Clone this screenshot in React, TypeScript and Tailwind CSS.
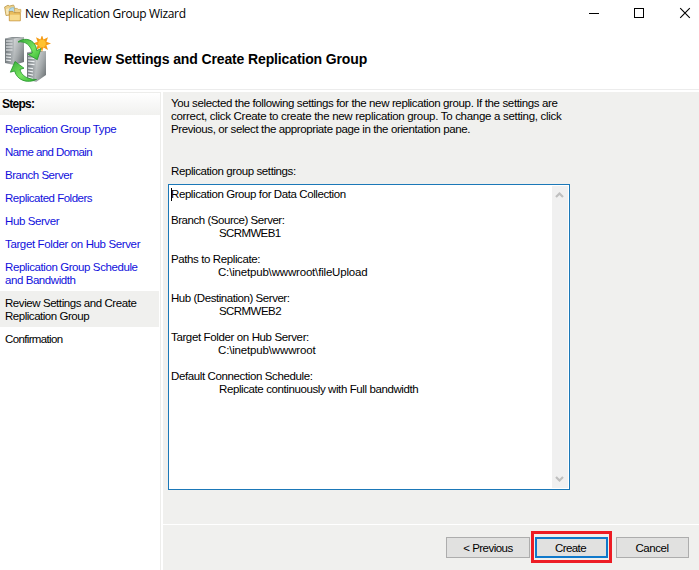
import type { ReactNode } from "react";

function FoldersIcon() {
  return (
    <svg width="18" height="18" viewBox="0 0 18 18" className="block">
      <path d="M.6 3 4 1.2l1.6.8L9.5 1l.8 1.5v8L2 11.5Z" fill="#ecd08a" stroke="#bd9a4c" strokeWidth=".8" />
      <path d="M2 5 9 3.4V9l-6.5 1.8Z" fill="#fae9b9" />
      <circle cx="8.6" cy="7.2" r="3.6" fill="#b9dceb" stroke="#80b3c8" strokeWidth=".7" />
      <path d="M10.5 7.8V4.4h2.8l.8 1h2.7v3" fill="#f2d28a" stroke="#c9a14e" strokeWidth=".7" />
      <path d="M5.3 9V7.4h3.6L10 8.6h6.3v8.2H5.3Z" fill="#e9bd5c" stroke="#c18e35" strokeWidth=".8" />
      <path d="M5.8 10.7h10v5.6h-10Z" fill="#f8db8d" />
    </svg>
  );
}

function ServersIcon() {
  return (
    <svg width="48" height="48" viewBox="0 0 48 48" className="block">
      <defs>
        <linearGradient id="front" x1="0" x2="1">
          <stop offset="0" stopColor="#70777b" />
          <stop offset="1" stopColor="#b6bbbd" />
        </linearGradient>
        <linearGradient id="side" x1="0" y1="0" x2="1" y2="1">
          <stop offset="0" stopColor="#d6d9da" />
          <stop offset=".5" stopColor="#a5aaac" />
          <stop offset="1" stopColor="#62686b" />
        </linearGradient>
        <linearGradient id="leaf" x1="0" y1="0" x2="1" y2="1">
          <stop offset="0" stopColor="#37ad38" />
          <stop offset=".55" stopColor="#79e461" />
          <stop offset="1" stopColor="#30b531" />
        </linearGradient>
      </defs>
      <path d="M0 2.5 7 1h12l-9 2Z" fill="#8b9194" />
      <path d="M0 2.5h9V29L0 27Z" fill="url(#front)" />
      <path d="m9 2.5 10-1.5v25L9 29Z" fill="url(#side)" />
      <path d="M1 5h6.5M1 8h6.5M1 11h6.5M1 14h6.5M1 18l5 .4M1 21l5 .5M1 24l5 .7" stroke="#edf0f2" strokeWidth="1.2" />
      <path d="m22 16.5 7-1.5h12l-10 2Z" fill="#8b9194" />
      <path d="M22 16.5h9V46l-9-3Z" fill="url(#front)" />
      <path d="m31 16.5 10-1.5v24l-10 7Z" fill="url(#side)" />
      <path d="m23 19 6.5.3M23 22l6.5.4M23 25l6.5.6M23 28l6.5.7M23 32l5 .7M23 35l5 .9M23 38l5 1.2M23 41l5 1.6" stroke="#edf0f2" strokeWidth="1.2" />
      <path d="m37 -1 1.5 4.6L43 1.2l-1.6 4.5L46 7.5l-4.6 1.7L43 14l-4.5-2.6L37 16l-1.6-4.6L31 14l1.6-4.8L28 7.5l4.6-1.8L31 1.2l4.4 2.4Z" fill="#f59b13" />
      <circle cx="37" cy="7.5" r="3.8" fill="#ffc22e" />
      <path d="M13 6C18 1.8 26 2.6 29.5 8c1.4 2.2 2 4 2.2 6.6l4.3-2.1-3.7 11.2-9-5.2 4-1.5C26 9.5 20.5 4.8 13 6Z" fill="url(#leaf)" stroke="#23932b" strokeWidth=".8" />
      <path d="M31.5 43.5C22 48 11.8 44 9.6 35L5.4 36.2l4.6-10.7 9 6.7-4 1.2c1.2 6 7 10 16.5 10.1Z" fill="url(#leaf)" stroke="#23932b" strokeWidth=".8" />
    </svg>
  );
}

function Step({ children, active = false, plain = false }: { children: ReactNode; active?: boolean; plain?: boolean }) {
  return (
    <div
      className={`w-[159px] pl-[5px] pt-[6px] pb-1 ${active ? "bg-[#f0f0ee] text-black" : plain ? "text-black" : "text-[#1010dc]"}`}
    >
      {children}
    </div>
  );
}

function T({ s, children }: { s: string; children: ReactNode }) {
  return <div className={`h-[13px] whitespace-pre ${s}`}>{children}</div>;
}

function Chevron({ down = false }: { down?: boolean }) {
  return (
    <svg width="9" height="8" viewBox="0 0 9 8" className={down ? "rotate-180" : ""}>
      <path d="m1 6 3.5-3.5L8 6" fill="none" stroke="#bfbfbf" strokeWidth="2.2" />
    </svg>
  );
}

export default function App() {
  return (
    <div className="flex h-[570px] w-[699px] flex-col overflow-hidden bg-white font-['Liberation_Sans',Arial,sans-serif] text-[11.5px] leading-[13px] text-black">
      <header className="flex h-[27px] shrink-0 items-start pl-[4px]">
        <div className="mt-[4px] w-[21px]">
          <FoldersIcon />
        </div>
        <div className="mt-[6px] grow font-['Open_Sans',sans-serif] text-[12px] leading-4 tracking-[-0.35px] whitespace-nowrap">
          New Replication Group Wizard
        </div>
        <svg width="110" height="27" viewBox="0 0 110 27" fill="none" stroke="#000" className="shrink-0">
          <path d="M0 13.5h10M45.5 8.5h9v9h-9Z" shapeRendering="crispEdges" />
          <path d="m91.2 8.2 9.6 9.6m0-9.6-9.6 9.6" strokeWidth="1.1" />
        </svg>
      </header>
      <div className="flex h-[63px] shrink-0 items-start border-b border-[#ececec] pl-[5px]">
        <div className="mt-[9px] w-[59px]">
          <ServersIcon />
        </div>
        <h1 className="mt-[24px] text-[14px] leading-4 font-bold tracking-[-0.13px] whitespace-nowrap">
          Review Settings and Create Replication Group
        </h1>
      </div>
      <div className="flex grow pt-[2px]">
        <nav className="w-[161px] shrink-0 border-t border-r border-[#ededeb]">
          <div className="mb-[2px] h-[22px] bg-linear-to-b from-white to-[#f1f1ef] pt-[5px] pl-[2px] text-[12px] font-bold tracking-[-0.75px]">
            Steps:
          </div>
          <Step><T s="tracking-[-0.4px]">Replication Group Type</T></Step>
          <Step><T s="tracking-[-0.59px]">Name and Domain</T></Step>
          <Step><T s="tracking-[-0.46px]">Branch Server</T></Step>
          <Step><T s="tracking-[-0.49px]">Replicated Folders</T></Step>
          <Step><T s="tracking-[-0.41px]">Hub Server</T></Step>
          <Step><T s="tracking-[-0.37px]">Target Folder on Hub Server</T></Step>
          <Step>
            <T s="tracking-[-0.41px]">Replication Group Schedule</T>
            <T s="tracking-[-0.43px]">and Bandwidth</T>
          </Step>
          <Step active>
            <T s="tracking-[-0.43px]">Review Settings and Create</T>
            <T s="tracking-[-0.47px]">Replication Group</T>
          </Step>
          <Step plain><T s="tracking-[-0.64px]">Confirmation</T></Step>
        </nav>
        <main className="ml-[2px] flex grow flex-col bg-[#f0f0ee]">
          <div className="h-[432px] pt-[5px] pl-[5px]">
            <div className="pl-[3px]">
              <T s="tracking-[-0.37px]">You selected the following settings for the new replication group. If the settings are</T>
              <T s="tracking-[-0.3px]">correct, click Create to create the new replication group. To change a setting, click</T>
              <T s="tracking-[-0.386px]">Previous, or select the appropriate page in the orientation pane.</T>
              <div className="pt-[29px]">
                <T s="tracking-[-0.4px]">Replication group settings:</T>
              </div>
            </div>
            <div className="mt-[6px] flex h-[306px] w-[402px] justify-between border border-[#1b78b8] bg-white">
              <div className="pt-[3px] pl-[2px]">
                <div className="flex">
                  <div className="-mr-px h-[13px] w-px bg-black" />
                  <T s="tracking-[-0.41px]">Replication Group for Data Collection</T>
                </div>
                <div className="pt-[13px]"><T s="tracking-[-0.457px]">Branch (Source) Server:</T></div>
                <div className="pl-[48px]"><T s="tracking-[-0.62px]">SCRMWEB1</T></div>
                <div className="pt-[13px]"><T s="tracking-[-0.395px]">Paths to Replicate:</T></div>
                <div className="pl-[47px]"><T s="tracking-[-0.18px]">{"C:\\inetpub\\wwwroot\\fileUpload"}</T></div>
                <div className="pt-[13px]"><T s="tracking-[-0.45px]">Hub (Destination) Server:</T></div>
                <div className="pl-[48px]"><T s="tracking-[-0.56px]">SCRMWEB2</T></div>
                <div className="pt-[13px]"><T s="tracking-[-0.37px]">Target Folder on Hub Server:</T></div>
                <div className="pl-[47px]"><T s="tracking-[-0.16px]">{"C:\\inetpub\\wwwroot"}</T></div>
                <div className="pt-[13px]"><T s="tracking-[-0.38px]">Default Connection Schedule:</T></div>
                <div className="pl-[48px]"><T s="tracking-[-0.4px]">Replicate continuously with Full bandwidth</T></div>
              </div>
              <div className="my-px mr-px flex w-[16px] flex-col items-start justify-between bg-[#f0f0f0] py-[5px] pl-[3px]">
                <Chevron />
                <Chevron down />
              </div>
            </div>
          </div>
          <footer className="flex grow items-start border-t border-white pt-[6px] pl-[283px]">
            <button className="mt-[6px] mr-px h-[21px] w-[84px] border border-[#adadad] bg-[#e1e1e0] pt-px tracking-[-0.53px]">
              &lt; Previous
            </button>
            <div className="mr-[4px] h-[32px] w-[81px] border-[3px] border-[#ed1c24] p-[1px] pt-[3px]">
              <button className="h-[21px] w-[73px] border-2 border-[#0f79cb] bg-[#e1e1e0] pt-px pr-[2px] tracking-[-0.55px]">
                Create
              </button>
            </div>
            <button className="mt-[6px] h-[21px] w-[73px] border border-[#adadad] bg-[#e1e1e0] pt-px pr-px tracking-[-0.46px]">
              Cancel
            </button>
          </footer>
        </main>
      </div>
    </div>
  );
}
